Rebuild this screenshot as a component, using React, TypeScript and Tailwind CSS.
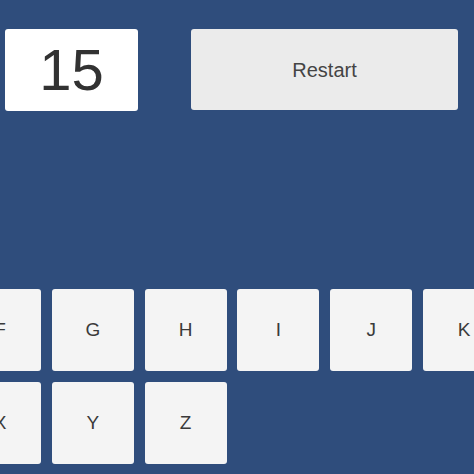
const rowOne = 'FGHIJK'.split('');
const rowTwo = 'XYZ'.split('');

function Key({ letter }: { letter: string }) {
  return (
    <button className="h-[82px] w-[82px] rounded-[3px] bg-[#f4f4f4] text-[19px] text-[#3a3a3a] flex items-center justify-center">
      {letter}
    </button>
  );
}

export default function App() {
  return (
    <div
      className="w-[474px] h-[474px] overflow-hidden bg-[#2f4d7c]"
      style={{ fontFamily: '"Liberation Sans", Arial, sans-serif' }}
    >
      <div className="flex items-start pt-[29px] pl-[5px] gap-[53px]">
        <div className="w-[133px] h-[82px] rounded-[3px] bg-white flex items-center justify-center text-[58px] leading-none text-[#323232]">
          15
        </div>
        <button className="w-[267px] h-[81px] rounded-[3px] bg-[#ebebeb] flex items-center justify-center text-[20px] text-[#444]">
          Restart
        </button>
      </div>

      {/* keyboard is wider than the window, first visible column is F */}
      <div className="mt-[178px] ml-[-41px] w-max grid grid-cols-[repeat(6,82px)] gap-x-[10.8px] gap-y-[11px]">
        {rowOne.map((l) => (
          <Key key={l} letter={l} />
        ))}
        {rowTwo.map((l) => (
          <Key key={l} letter={l} />
        ))}
      </div>
    </div>
  );
}
